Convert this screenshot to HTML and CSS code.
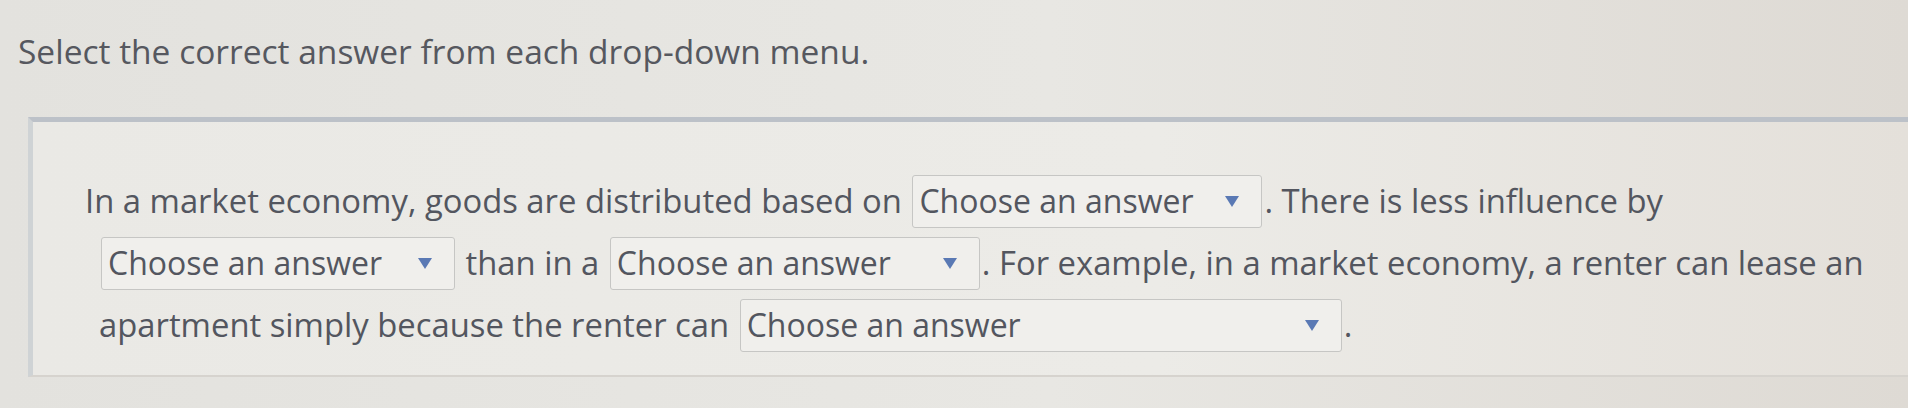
FILE: index.html
```html
<!DOCTYPE html>
<html lang="en">
<head>
  <meta charset="UTF-8">
  <meta name="viewport" content="width=device-width, initial-scale=1.0">
  <title>Drop-down Question</title>
  <link rel="stylesheet" href="styles.css">
</head>
<body>
  <p class="prompt">Select the correct answer from each drop-down menu.</p>

  <div class="panel">
    <p class="question">
      In a market economy, goods are distributed based on
      <span class="dropdown dd-basis" role="button"><span class="dd-label">Choose an answer</span><span class="caret"></span></span>. There is less influence by<br>
      <span class="dropdown dd-influence" role="button"><span class="dd-label">Choose an answer</span><span class="caret"></span></span>
      than in a
      <span class="dropdown dd-system" role="button"><span class="dd-label">Choose an answer</span><span class="caret"></span></span>. For example, in a market economy, a renter can lease an<br>
      apartment simply because the renter can
      <span class="dropdown dd-reason" role="button"><span class="dd-label">Choose an answer</span><span class="caret"></span></span>.
    </p>
  </div>
</body>
</html>
```

FILE: styles.css
```css
body {
  margin: 0;
  height: 408px;
  overflow: hidden;
  font-family: "Open Sans", Arial, sans-serif;
  color: #53565f;
  background: linear-gradient(90deg, #e3e2de 0%, #e8e7e3 55%, #dedad4 100%);
}

.prompt {
  margin: 0;
  padding: 31px 0 0 18px;
  font-size: 33.5px;
  line-height: 40px;
  color: #56585f;
  white-space: nowrap;
}

.panel {
  margin: 46px 0 0 28px;
  height: 260px;
  box-sizing: border-box;
  border-top: 5px solid #bcc1c8;
  border-left: 5px solid #cfd3d5;
  border-bottom: 2px solid #d6d3ce;
  background: linear-gradient(90deg, #eae9e5 0%, #ecebe7 60%, #e4e0da 100%);
  padding: 48px 0 0 66px;
}

.question {
  margin: 0;
  font-size: 32.8px;
  line-height: 62px;
  white-space: nowrap;
  text-indent: -14px;
}

.dropdown {
  display: inline-flex;
  align-items: center;
  justify-content: space-between;
  box-sizing: border-box;
  height: 53px;
  margin: 0 2px;
  padding: 0 22px 0 6px;
  vertical-align: baseline;
  text-indent: 0;
  border: 1px solid #c6c6c4;
  border-radius: 3px;
  background: #f0efec;
  font-size: 32px;
  line-height: 1;
  cursor: pointer;
}

.dd-basis { width: 350px; }
.dd-influence { width: 354px; }
.dd-system { width: 370px; }
.dd-reason { width: 602px; }

.caret {
  width: 0;
  height: 0;
  border-left: 7px solid transparent;
  border-right: 7px solid transparent;
  border-top: 11px solid #5a79b4;
}
```
